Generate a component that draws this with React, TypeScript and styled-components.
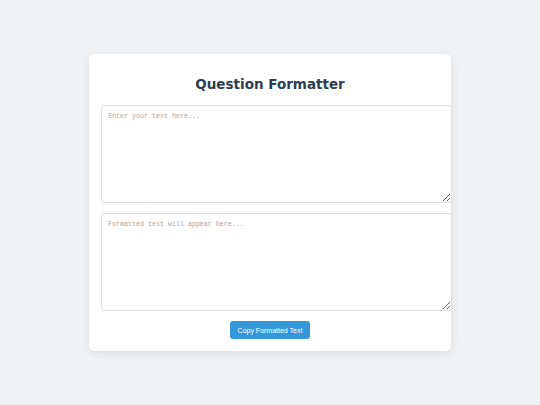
import React from 'react';
import styled, { createGlobalStyle } from 'styled-components';

const GlobalStyle = createGlobalStyle`
  html, body {
    margin: 0;
    padding: 0;
    background: #f0f3f6;
  }
  body {
    font-family: 'DejaVu Sans', Verdana, sans-serif;
  }
`;

const Page = styled.div`
  min-height: 100vh;
  display: flex;
  align-items: center;
  justify-content: center;
`;

const Card = styled.div`
  box-sizing: border-box;
  width: 362px;
  padding: 21px 12px 12px;
  background: #fff;
  border-radius: 5px;
  box-shadow: 0 2px 10px rgba(0, 0, 0, 0.1);
  display: flex;
  flex-direction: column;
`;

const Title = styled.h1`
  margin: 0 0 12px;
  font-family: 'DejaVu Sans', Verdana, sans-serif;
  font-size: 13.5px;
  line-height: 18px;
  font-weight: bold;
  text-align: center;
  color: #2c3e50;
`;

const TextArea = styled.textarea`
  box-sizing: border-box;
  width: 351px;
  height: 98px;
  margin: 0 0 10px;
  padding: 6px;
  border: 1px solid #e0e0e0;
  border-radius: 3px;
  font-family: 'Liberation Mono', 'Courier New', monospace;
  font-size: 6.67px;
  color: #333;
  outline: none;
  &::placeholder {
    color: #a6a6a6;
  }
`;

const ButtonRow = styled.div`
  display: flex;
  justify-content: center;
`;

const CopyButton = styled.button`
  height: 18px;
  padding: 0 8px;
  border: none;
  border-radius: 3px;
  background: #3498db;
  color: #fff;
  font-family: 'Liberation Sans', Arial, sans-serif;
  font-size: 7px;
  cursor: pointer;
`;

export default function App() {
  const [input, setInput] = React.useState('');
  const formatted = input;

  return (
    <>
      <GlobalStyle />
      <Page>
        <Card>
          <Title>Question Formatter</Title>
          <TextArea
            placeholder="Enter your text here..."
            value={input}
            onChange={(e) => setInput(e.target.value)}
          />
          <TextArea placeholder="Formatted text will appear here..." value={formatted} readOnly />
          <ButtonRow>
            <CopyButton onClick={() => navigator.clipboard?.writeText(formatted)}>
              Copy Formatted Text
            </CopyButton>
          </ButtonRow>
        </Card>
      </Page>
    </>
  );
}
